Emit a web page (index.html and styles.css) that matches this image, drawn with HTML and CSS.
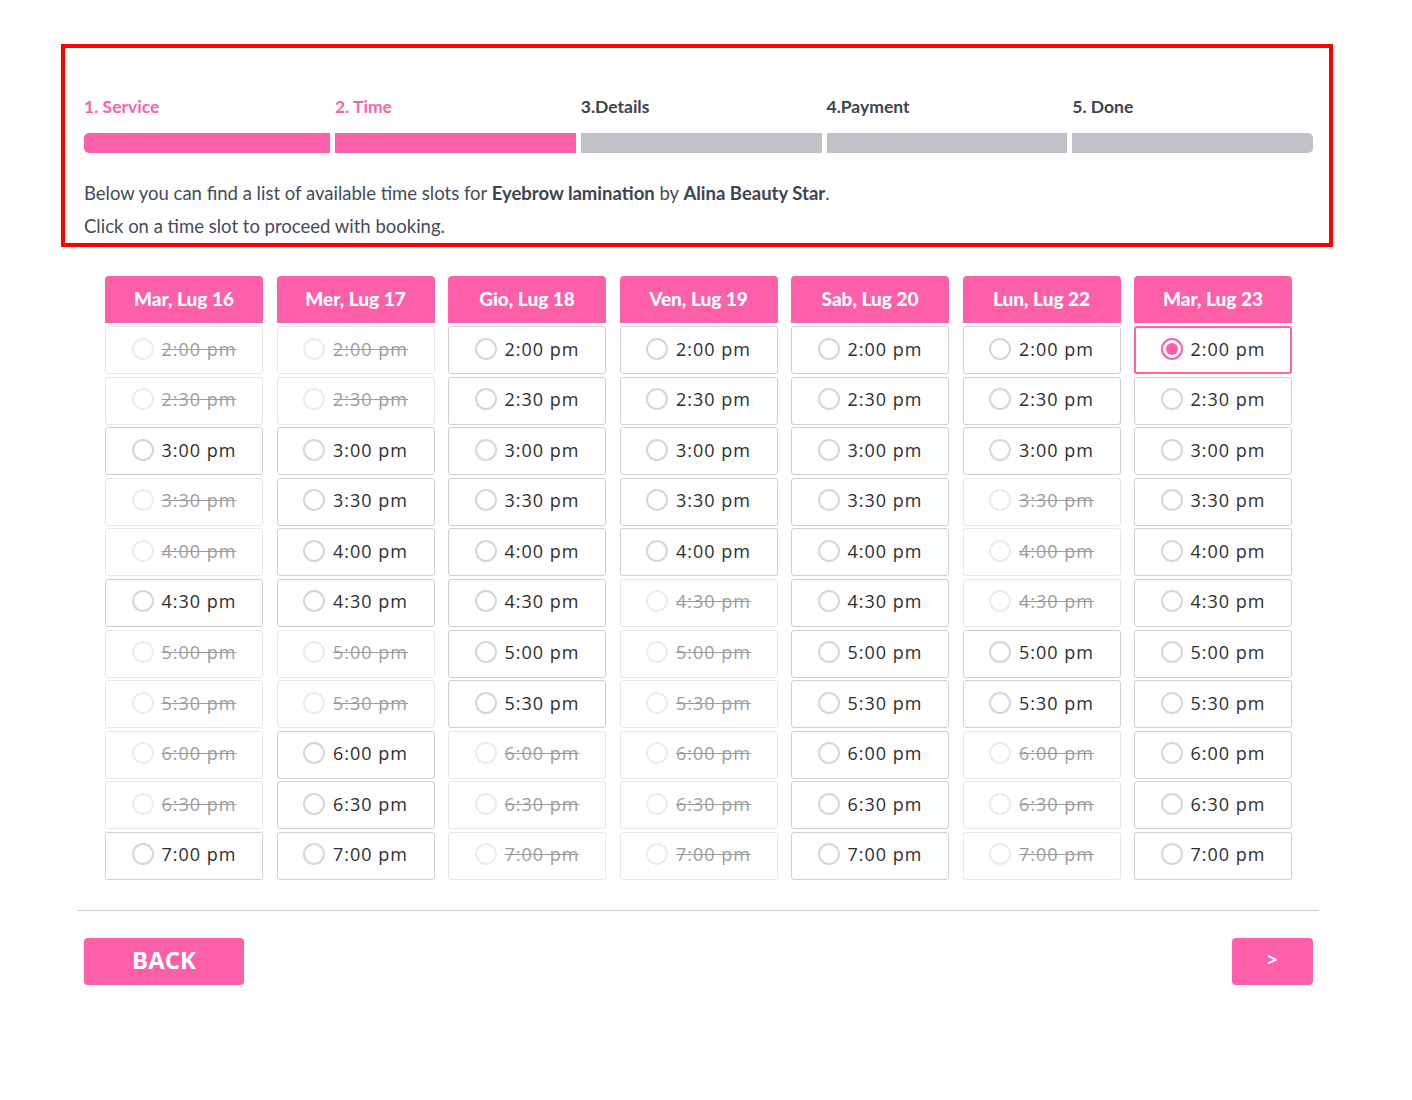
FILE: index.html
```html
<!DOCTYPE html>
<html lang="it">
<head>
    <meta charset="UTF-8">
    <meta name="viewport" content="width=device-width, initial-scale=1.0">
    <title>Prenotazione</title>
    <link rel="stylesheet" href="styles.css">
</head>
<body>
    <div class="wizard">
        <div class="steps">
            <div class="step done"><span>1. Service</span><div class="bar first"></div></div>
            <div class="step done"><span>2. Time</span><div class="bar"></div></div>
            <div class="step"><span>3.Details</span><div class="bar"></div></div>
            <div class="step"><span>4.Payment</span><div class="bar"></div></div>
            <div class="step"><span>5. Done</span><div class="bar last"></div></div>
        </div>
        <p class="info">Below you can find a list of available time slots for <strong>Eyebrow lamination</strong> by <strong>Alina Beauty Star</strong>.</p>
        <p class="info">Click on a time slot to proceed with booking.</p>
    </div>

    <div class="days">
        <div class="day">
            <div class="day-head">Mar, Lug 16</div>
            <div class="slot off"><span class="dot"></span>2:00 pm</div>
            <div class="slot off"><span class="dot"></span>2:30 pm</div>
            <div class="slot"><span class="dot"></span>3:00 pm</div>
            <div class="slot off"><span class="dot"></span>3:30 pm</div>
            <div class="slot off"><span class="dot"></span>4:00 pm</div>
            <div class="slot"><span class="dot"></span>4:30 pm</div>
            <div class="slot off"><span class="dot"></span>5:00 pm</div>
            <div class="slot off"><span class="dot"></span>5:30 pm</div>
            <div class="slot off"><span class="dot"></span>6:00 pm</div>
            <div class="slot off"><span class="dot"></span>6:30 pm</div>
            <div class="slot"><span class="dot"></span>7:00 pm</div>
        </div>
        <div class="day">
            <div class="day-head">Mer, Lug 17</div>
            <div class="slot off"><span class="dot"></span>2:00 pm</div>
            <div class="slot off"><span class="dot"></span>2:30 pm</div>
            <div class="slot"><span class="dot"></span>3:00 pm</div>
            <div class="slot"><span class="dot"></span>3:30 pm</div>
            <div class="slot"><span class="dot"></span>4:00 pm</div>
            <div class="slot"><span class="dot"></span>4:30 pm</div>
            <div class="slot off"><span class="dot"></span>5:00 pm</div>
            <div class="slot off"><span class="dot"></span>5:30 pm</div>
            <div class="slot"><span class="dot"></span>6:00 pm</div>
            <div class="slot"><span class="dot"></span>6:30 pm</div>
            <div class="slot"><span class="dot"></span>7:00 pm</div>
        </div>
        <div class="day">
            <div class="day-head">Gio, Lug 18</div>
            <div class="slot"><span class="dot"></span>2:00 pm</div>
            <div class="slot"><span class="dot"></span>2:30 pm</div>
            <div class="slot"><span class="dot"></span>3:00 pm</div>
            <div class="slot"><span class="dot"></span>3:30 pm</div>
            <div class="slot"><span class="dot"></span>4:00 pm</div>
            <div class="slot"><span class="dot"></span>4:30 pm</div>
            <div class="slot"><span class="dot"></span>5:00 pm</div>
            <div class="slot"><span class="dot"></span>5:30 pm</div>
            <div class="slot off"><span class="dot"></span>6:00 pm</div>
            <div class="slot off"><span class="dot"></span>6:30 pm</div>
            <div class="slot off"><span class="dot"></span>7:00 pm</div>
        </div>
        <div class="day">
            <div class="day-head">Ven, Lug 19</div>
            <div class="slot"><span class="dot"></span>2:00 pm</div>
            <div class="slot"><span class="dot"></span>2:30 pm</div>
            <div class="slot"><span class="dot"></span>3:00 pm</div>
            <div class="slot"><span class="dot"></span>3:30 pm</div>
            <div class="slot"><span class="dot"></span>4:00 pm</div>
            <div class="slot off"><span class="dot"></span>4:30 pm</div>
            <div class="slot off"><span class="dot"></span>5:00 pm</div>
            <div class="slot off"><span class="dot"></span>5:30 pm</div>
            <div class="slot off"><span class="dot"></span>6:00 pm</div>
            <div class="slot off"><span class="dot"></span>6:30 pm</div>
            <div class="slot off"><span class="dot"></span>7:00 pm</div>
        </div>
        <div class="day">
            <div class="day-head">Sab, Lug 20</div>
            <div class="slot"><span class="dot"></span>2:00 pm</div>
            <div class="slot"><span class="dot"></span>2:30 pm</div>
            <div class="slot"><span class="dot"></span>3:00 pm</div>
            <div class="slot"><span class="dot"></span>3:30 pm</div>
            <div class="slot"><span class="dot"></span>4:00 pm</div>
            <div class="slot"><span class="dot"></span>4:30 pm</div>
            <div class="slot"><span class="dot"></span>5:00 pm</div>
            <div class="slot"><span class="dot"></span>5:30 pm</div>
            <div class="slot"><span class="dot"></span>6:00 pm</div>
            <div class="slot"><span class="dot"></span>6:30 pm</div>
            <div class="slot"><span class="dot"></span>7:00 pm</div>
        </div>
        <div class="day">
            <div class="day-head">Lun, Lug 22</div>
            <div class="slot"><span class="dot"></span>2:00 pm</div>
            <div class="slot"><span class="dot"></span>2:30 pm</div>
            <div class="slot"><span class="dot"></span>3:00 pm</div>
            <div class="slot off"><span class="dot"></span>3:30 pm</div>
            <div class="slot off"><span class="dot"></span>4:00 pm</div>
            <div class="slot off"><span class="dot"></span>4:30 pm</div>
            <div class="slot"><span class="dot"></span>5:00 pm</div>
            <div class="slot"><span class="dot"></span>5:30 pm</div>
            <div class="slot off"><span class="dot"></span>6:00 pm</div>
            <div class="slot off"><span class="dot"></span>6:30 pm</div>
            <div class="slot off"><span class="dot"></span>7:00 pm</div>
        </div>
        <div class="day">
            <div class="day-head">Mar, Lug 23</div>
            <div class="slot on"><span class="dot"></span>2:00 pm</div>
            <div class="slot"><span class="dot"></span>2:30 pm</div>
            <div class="slot"><span class="dot"></span>3:00 pm</div>
            <div class="slot"><span class="dot"></span>3:30 pm</div>
            <div class="slot"><span class="dot"></span>4:00 pm</div>
            <div class="slot"><span class="dot"></span>4:30 pm</div>
            <div class="slot"><span class="dot"></span>5:00 pm</div>
            <div class="slot"><span class="dot"></span>5:30 pm</div>
            <div class="slot"><span class="dot"></span>6:00 pm</div>
            <div class="slot"><span class="dot"></span>6:30 pm</div>
            <div class="slot"><span class="dot"></span>7:00 pm</div>
        </div>
    </div>

    <hr class="divider">

    <div class="nav">
        <button class="btn back">BACK</button>
        <button class="btn next">&gt;</button>
    </div>
</body>
</html>
```

FILE: styles.css
```css
body {
    margin: 0;
    font-family: Lato, "Noto Sans", sans-serif;
    color: #454b57;
    background: #fff;
}

/* booking steps box */
.wizard {
    width: 1272px;
    margin: 44px 0 0 61px;
    border: 4px solid #ff0000;
    padding: 48px 16px 0 19px;
    box-sizing: border-box;
    height: 203px;
}

.steps {
    display: grid;
    grid-template-columns: 246px repeat(4, 1fr);
    gap: 5px;
}

.step span {
    display: block;
    font-size: 17.5px;
    font-weight: bold;
    color: #3d4350;
    height: 22px;
    line-height: 22px;
    margin-bottom: 15px;
}

.step.done span {
    color: #fd5fa9;
}

.bar {
    height: 20px;
    background: #bfc3c7;
}

.step.done .bar {
    background: #fd5fa9;
}

.bar.first {
    border-radius: 5px 0 0 5px;
}

.bar.last {
    border-radius: 0 5px 5px 0;
}

.info {
    margin: 0;
    font-size: 18.5px;
    line-height: 33px;
}

.info:first-of-type {
    margin-top: 24px;
}

.info strong {
    color: #3d4350;
}

/* time slots */
.days {
    display: grid;
    grid-template-columns: repeat(7, 158px);
    column-gap: 13.5px;
    margin: 29px 0 0 105px;
}

.day-head {
    height: 47px;
    line-height: 45px;
    background: #fd5fa9;
    color: #fff;
    text-align: center;
    font-weight: 900;
    font-size: 19px;
    border-radius: 4px 4px 0 0;
    margin-bottom: 3px;
}

.slot {
    height: 48px;
    margin-bottom: 2.6px;
    padding-bottom: 3px;
    box-sizing: border-box;
    border: 1px solid #cfcfcf;
    border-radius: 3px;
    display: flex;
    align-items: center;
    justify-content: center;
    gap: 8px;
    font-family: "Open Sans", sans-serif;
    font-size: 18px;
    letter-spacing: 1px;
    color: #2e2e2e;
}

.dot {
    width: 22px;
    height: 22px;
    box-sizing: border-box;
    border: 2px solid #d6d6d6;
    border-radius: 50%;
    position: relative;
}

.slot.off {
    border-color: #e7e7e7;
    color: #9c9c9c;
    text-decoration: line-through;
}

.slot.off .dot {
    border-color: #ececec;
}

.slot.on {
    border: 2px solid #fd5fa9;
}

.slot.on .dot {
    border-color: #fd5fa9;
}

.slot.on .dot::after {
    content: "";
    position: absolute;
    left: 3px;
    top: 3px;
    width: 12px;
    height: 12px;
    border-radius: 50%;
    background: #fd5fa9;
}

.divider {
    border: none;
    border-top: 1px solid #cccccc;
    width: 1241px;
    margin: 27px 0 0 78px;
}

.nav {
    display: flex;
    justify-content: space-between;
    width: 1229px;
    margin: 27px 0 0 84px;
}

.btn {
    height: 47px;
    border: none;
    border-radius: 4px;
    background: #fd5fa9;
    color: #fff;
    font-family: "Open Sans", sans-serif;
    font-weight: bold;
    padding: 0 0 4px;
    cursor: pointer;
}

.back {
    width: 160px;
    font-size: 24px;
}

.next {
    width: 81px;
    font-size: 18px;
}
```
